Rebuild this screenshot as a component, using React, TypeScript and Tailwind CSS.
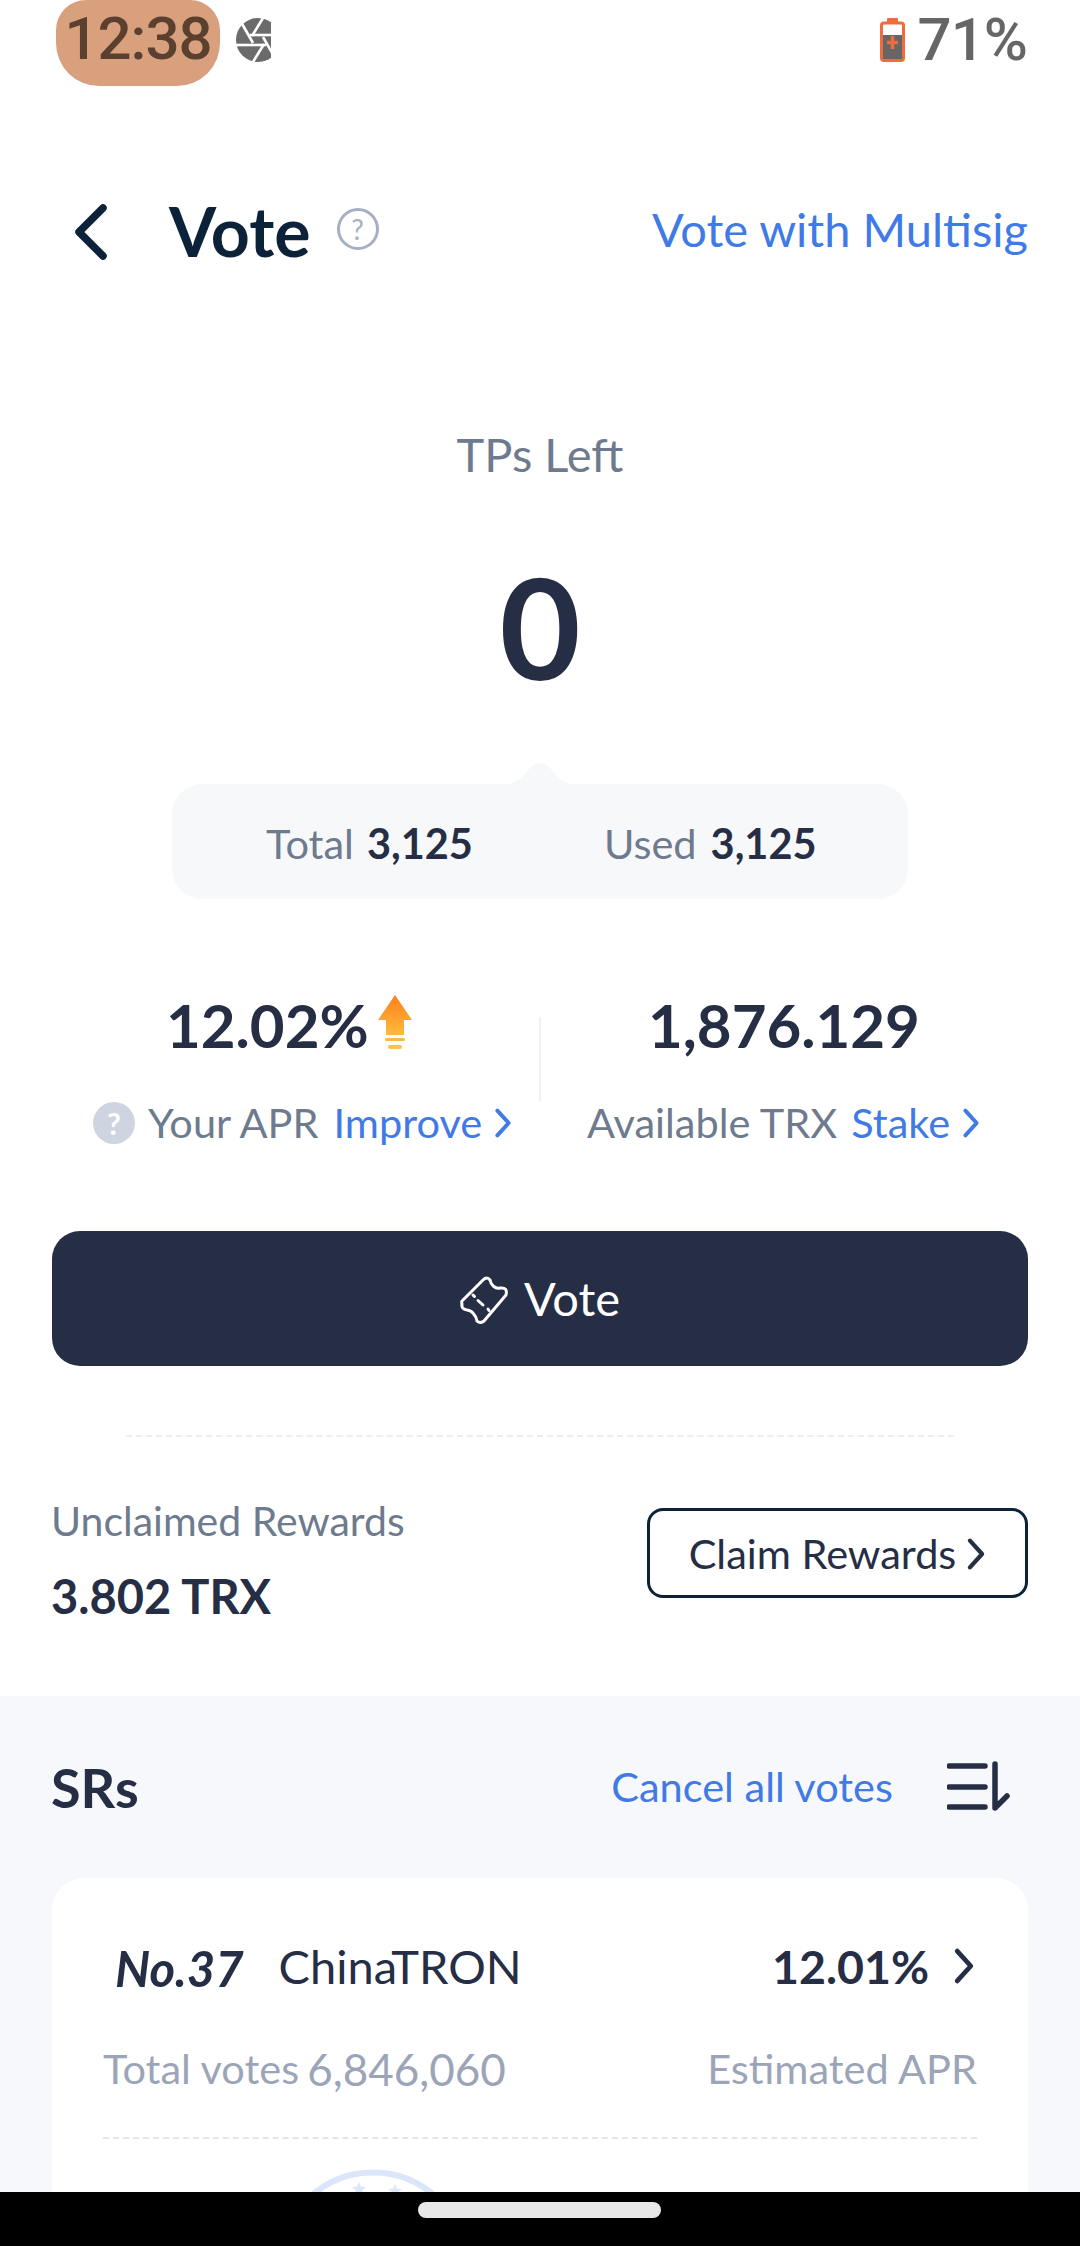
const lato = "font-['Lato','Noto_Sans',sans-serif]";

function Chevron({ className, color, w = 3.5 }: { className: string; color: string; w?: number }) {
  return (
    <svg viewBox="0 0 16 28" className={className} fill="none" stroke={color} strokeWidth={w} strokeLinecap="round" strokeLinejoin="round">
      <path d="M3 3 L13 14 L3 25" />
    </svg>
  );
}

function Aperture() {
  return (
    <svg viewBox="0 0 35 44" className="w-[35px] h-[44px]">
      <circle cx="22" cy="22" r="22" fill="#6b6b6b" />
      <g stroke="#fff" strokeWidth="2.6">
        <path d="M5 4 L17 25" />
        <path d="M27 0 L16 18" />
        <path d="M44 17 L14 17" />
        <path d="M39 40 L27 19" />
        <path d="M17 44 L28 26" />
        <path d="M0 27 L30 27" />
      </g>
    </svg>
  );
}

function Battery() {
  return (
    <svg viewBox="0 0 25 44" className="w-[25px] h-[44px]">
      <rect x="7" y="0" width="11" height="6" fill="#f26b3a" rx="1" />
      <rect x="1.5" y="5" width="22" height="37.5" rx="2.5" fill="#fff" stroke="#f26b3a" strokeWidth="3" />
      <rect x="3" y="17" width="19" height="24" fill="#666" />
      <path d="M12.5 18 V31 M7 24.5 H18" stroke="#f26b3a" strokeWidth="3.5" />
    </svg>
  );
}

function Ticket() {
  return (
    <svg viewBox="0 0 50 54" className="w-[50px] h-[54px]" fill="none" stroke="#fff" strokeWidth="3" strokeLinecap="round" strokeLinejoin="round">
      <path d="M23 8 Q27 4 30 8 C31 13 35 17 40 16 Q48 15 46 23 L24 49 Q20 52 17 49 C16 43 11 38 7 38 Q1 37 2 32 Q1 29 3 28 Z" />
      <path d="M13 23 L14.5 24.5 M18 28.5 L23 33 M28 37 L29 38.5" />
    </svg>
  );
}

function Arrow() {
  return (
    <svg viewBox="0 0 36 54" className="w-[36px] h-[54px]">
      <defs>
        <linearGradient id="ar" x1="0" y1="0" x2="0" y2="1">
          <stop offset="0" stopColor="#fd7f1c" />
          <stop offset="1" stopColor="#fdbb3b" />
        </linearGradient>
      </defs>
      <path d="M18 0 L35 25 H27 V40 H9 V25 H1 Z" fill="url(#ar)" />
      <rect x="8" y="43" width="20" height="3" rx="1.5" fill="#fdbb3b" />
      <rect x="11" y="50" width="14" height="4" rx="2" fill="#fdc24a" />
    </svg>
  );
}

function QFilled() {
  return (
    <div className="w-[42px] h-[42px] rounded-full bg-[#cfd5e0] flex items-center justify-center text-white font-bold text-[30px] leading-none">?</div>
  );
}

function Star({ x, y }: { x: number; y: number }) {
  return (
    <path
      transform={`translate(${x} ${y})`}
      d="M0 -7 L2 -2.2 L7 -2 L3.1 1.1 L4.4 6 L0 3.3 L-4.4 6 L-3.1 1.1 L-7 -2 L-2 -2.2 Z"
      fill="#dbe6fb"
    />
  );
}

export default function App() {
  return (
    <div className={`${lato} relative w-[1080px] h-[2246px] overflow-hidden bg-white text-[#252e44]`}>
      {/* status bar */}
      <div className="h-[86px] flex items-start">
        <div className="ml-[56px] w-[164px] h-[86px] rounded-b-[43px] rounded-t-[30px] bg-[#d9a07d] flex items-center justify-center font-['Roboto',sans-serif] font-medium tracking-[-1px] text-[60px] leading-none text-[#5b4030] pb-[8px]">12:38</div>
        <div className="ml-[16px] mt-[18px]"><Aperture /></div>
        <div className="ml-auto mr-[53px] mt-[10px] h-[60px] flex items-center gap-[13px] font-['Roboto',sans-serif] font-medium tracking-[-1px] text-[#666] text-[60px] leading-none">
          <Battery />
          <span>71%</span>
        </div>
      </div>

      {/* header */}
      <div className="mt-[110px] h-[70px] flex items-center">
        <svg viewBox="0 0 40 58" className="ml-[70px] mt-[2px] w-[40px] h-[58px]" fill="none" stroke="#0c2238" strokeWidth="7.5" strokeLinecap="round" strokeLinejoin="round">
          <path d="M33 5 L9 29 L33 53" />
        </svg>
        <span className="ml-[59px] text-[68px] leading-none font-bold text-[#0c2238]">Vote</span>
        <div className="ml-[26px] -mt-[4px] w-[42px] h-[42px] rounded-full border-[3px] border-[#a6b0c4] flex items-center justify-center text-[#a6b0c4] text-[28px] leading-none">?</div>
        <span className="ml-auto mr-[52px] -mt-[4px] text-[47px] leading-none text-[#3f7ae6]">Vote with Multisig</span>
      </div>

      {/* TP */}
      <div className="mt-[165px] text-center text-[47px] leading-none text-[#6e7a8e]">TPs Left</div>
      <div className="mt-[73px] text-center text-[140px] leading-[150px] font-bold">0</div>

      {/* total card */}
      <div className="relative mx-[172px] mt-[83px] h-[115px] pt-[5px] rounded-[30px] bg-[#f6f8fa] flex items-center text-[41.5px] leading-none">
        <svg viewBox="0 0 90 24" className="absolute left-[323px] -top-[23px] w-[90px] h-[24px]">
          <path d="M0 24 C18 24 24 20 34 8 C40 0 50 0 56 8 C64 20 72 24 90 24 Z" fill="#f6f8fa" />
        </svg>
        <span className="ml-[94px] text-[#6e7a8e]">Total</span>
        <span className="ml-[13px] font-bold">3,125</span>
        <span className="ml-[131px] text-[#6e7a8e]">Used</span>
        <span className="ml-[14px] font-bold">3,125</span>
      </div>

      {/* stats */}
      <div className="relative mt-[88px] h-[168px]">
        <div className="absolute left-[539px] top-[30px] w-[2px] h-[84px] bg-[#eef1f7]" />
        <div className="flex">
          <div className="w-[540px]">
            <div className="h-[76px] flex items-center pl-[166px] text-[60px] leading-none font-bold">
              12.02%
              <span className="ml-[8px] -mt-[6px]"><Arrow /></span>
            </div>
            <div className="mt-[39px] flex items-center pl-[93px] text-[41.5px] leading-none text-[#6e7a8e]">
              <QFilled />
              <span className="ml-[13px]">Your APR</span>
              <span className="ml-[15px] text-[#3f7ae6]">Improve</span>
              <Chevron className="ml-[12px] w-[18px] h-[32px]" color="#3f7ae6" />
            </div>
          </div>
          <div className="w-[540px]">
            <div className="h-[76px] flex items-center pl-[108px] text-[60px] leading-none font-bold">1,876.129</div>
            <div className="mt-[39px] h-[42px] flex items-center pl-[47px] text-[41.5px] leading-none text-[#6e7a8e]">
              <span>Available TRX</span>
              <span className="ml-[14px] text-[#3f7ae6]">Stake</span>
              <Chevron className="ml-[12px] w-[18px] h-[32px]" color="#3f7ae6" />
            </div>
          </div>
        </div>
      </div>

      {/* vote button */}
      <div className="mx-[52px] mt-[76px] h-[135px] rounded-[28px] bg-[#252e44] flex items-center justify-center gap-[14px] text-white text-[47px] leading-none">
        <Ticket />
        <span>Vote</span>
      </div>

      <div className="mx-[126px] mt-[69px] border-t-2 border-dashed border-[#eceef1]" />

      {/* rewards */}
      <div className="mx-[52px] mt-[71px] h-[90px] flex items-start justify-between">
        <div className="-ml-[1px]">
          <div className="text-[41px] leading-none text-[#6e7a8e] -mt-[8px]">Unclaimed Rewards</div>
          <div className="mt-[32px] text-[47px] leading-none font-bold">3.802 TRX</div>
        </div>
        <div className="w-[381px] h-[90px] pt-[2px] rounded-[16px] border-[3px] border-[#0c2238] flex items-center justify-center text-[41.5px] leading-none">
          Claim Rewards
          <Chevron className="ml-[10px] w-[20px] h-[34px]" color="#252e44" />
        </div>
      </div>

      {/* SR section */}
      <div className="mt-[98px] h-[560px] bg-[#f6f8fb] px-[52px]">
        <div className="pt-[64px] h-[182px] flex items-start">
          <span className="-ml-[1px] text-[54px] leading-[56px] font-bold">SRs</span>
          <span className="ml-auto -mt-[2px] text-[41.5px] leading-[56px] text-[#3f7ae6]">Cancel all votes</span>
          <svg viewBox="0 0 64 56" className="ml-[54px] mr-[17px] w-[64px] h-[56px]" fill="none" stroke="#252e44" strokeWidth="5.5" strokeLinecap="round" strokeLinejoin="round">
            <path d="M2 6 H38 M2 27 H38 M2 47 H38 M48 4 V48 L60 36" />
          </svg>
        </div>
        <div className="h-[400px] rounded-t-[32px] bg-white px-[51px] pt-[60px]">
          <div className="h-[56px] flex items-center">
            <span className="ml-[12px] mt-[4px] italic font-bold text-[49px] leading-none">No.37</span>
            <span className="ml-[35px] text-[47px] leading-none">ChinaTRON</span>
            <span className="ml-auto text-[46.5px] leading-none font-bold">12.01%</span>
            <Chevron className="ml-[24px] mr-[2px] w-[22px] h-[38px]" color="#252e44" />
          </div>
          <div className="mt-[53px] h-[44px] flex items-center text-[41.5px] leading-none text-[#9ca5b8]">
            <span>Total votes</span>
            <span className="ml-[8px] text-[44px]">6,846,060</span>
            <span className="ml-auto">Estimated APR</span>
          </div>
          <div className="mt-[46px] border-t-2 border-dashed border-[#e3e6ea]" />
          <div className="mt-[30px] ml-[197px]">
            <svg viewBox="0 0 150 40" className="w-[150px] h-[40px]" fill="none">
              <path d="M10 28 A93 93 0 0 1 136 28" stroke="#dbe6fb" strokeWidth="6" />
              <Star x={59} y={20} />
              <Star x={95} y={22} />
            </svg>
          </div>
        </div>
      </div>

      {/* nav bar */}
      <div className="absolute left-0 right-0 bottom-0 h-[54px] bg-black">
        <div className="absolute left-[418px] top-[10px] w-[243px] h-[16px] rounded-full bg-[#e8e8e8]" />
      </div>
    </div>
  );
}
